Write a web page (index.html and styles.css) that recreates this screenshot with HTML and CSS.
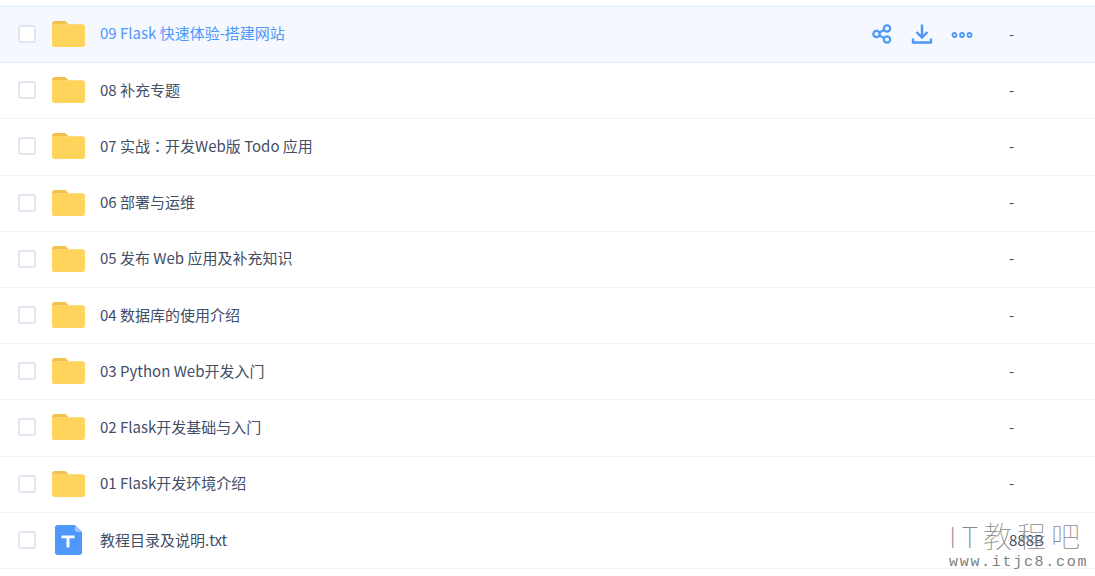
FILE: index.html
```html
<!DOCTYPE html>
<html lang="zh">
<head>
<meta charset="utf-8">
<title>文件列表</title>
<link rel="stylesheet" href="styles.css">
</head>
<body>
<svg class="defs" width="0" height="0">
  <symbol id="folder" viewBox="0 0 33 26">
    <path d="M0 3C0 1.300 1.200 0 2.800 0h9.500c1 0 1.600.4 2.200 1L16.500 3.500H0z" fill="#f0c050"/>
    <path d="M0 4.500C0 3.800 .6 3.300 1.300 3.300H30.500c1.400 0 2.500 1.100 2.500 2.500V23.700c0 1.300-1.100 2.300-2.500 2.300H2.500C1.100 26 0 25 0 23.700z" fill="#ffd45c"/>
  </symbol>
</svg>
<main class="list">
  <div class="row active">
    <span class="check"></span>
    <svg class="folder"><use href="#folder"/></svg>
    <span class="name">09 Flask 快速体验-搭建网站</span>
    <div class="actions">
      <svg class="act" width="22" height="22" viewBox="0 0 22 22" fill="none" stroke="#4e97f7" stroke-width="2.200"><circle cx="5.500" cy="11" r="3.200"/><circle cx="16" cy="5.500" r="3.200"/><circle cx="16" cy="16.500" r="3.200"/><path d="M8.500 9.500l4.700-2.600M8.500 12.500l4.700 2.600"/></svg>
      <svg class="act" width="22" height="22" viewBox="0 0 22 22" fill="none" stroke="#4e97f7" stroke-width="2.400"><path d="M11 1.500v12.500M5.500 9l5.500 5.500L16.500 9"/><path d="M2 15.500v4h18v-4" stroke-linejoin="round"/></svg>
      <svg class="act" width="22" height="22" viewBox="0 0 22 22" fill="none" stroke="#4e97f7" stroke-width="1.800"><circle cx="3.500" cy="12" r="2"/><circle cx="11" cy="12" r="2"/><circle cx="18.500" cy="12" r="2"/></svg>
    </div>
    <span class="size">-</span>
  </div>
  <div class="row"><span class="check"></span><svg class="folder"><use href="#folder"/></svg><span class="name">08 补充专题</span><span class="size">-</span></div>
  <div class="row"><span class="check"></span><svg class="folder"><use href="#folder"/></svg><span class="name">07 实战<span class="punct" lang="zh-TW">：</span>开发Web版 Todo 应用</span><span class="size">-</span></div>
  <div class="row"><span class="check"></span><svg class="folder"><use href="#folder"/></svg><span class="name">06 部署与运维</span><span class="size">-</span></div>
  <div class="row"><span class="check"></span><svg class="folder"><use href="#folder"/></svg><span class="name">05 发布 Web 应用及补充知识</span><span class="size">-</span></div>
  <div class="row"><span class="check"></span><svg class="folder"><use href="#folder"/></svg><span class="name">04 数据库的使用介绍</span><span class="size">-</span></div>
  <div class="row"><span class="check"></span><svg class="folder"><use href="#folder"/></svg><span class="name">03 Python Web开发入门</span><span class="size">-</span></div>
  <div class="row"><span class="check"></span><svg class="folder"><use href="#folder"/></svg><span class="name">02 Flask开发基础与入门</span><span class="size">-</span></div>
  <div class="row"><span class="check"></span><svg class="folder"><use href="#folder"/></svg><span class="name">01 Flask开发环境介绍</span><span class="size">-</span></div>
  <div class="row last">
    <span class="check"></span>
    <svg class="file" viewBox="0 0 27 30"><path d="M2.500 0H20l7 7v20.500c0 1.400-1.100 2.500-2.500 2.500h-22C1.100 30 0 28.900 0 27.500v-25C0 1.100 1.100 0 2.500 0z" fill="#4e97fb"/><path d="M20 0l7 7h-5c-1.200 0-2-.8-2-2z" fill="#9cc5fd"/><path d="M6.500 10.500h13v2.800h-5v9.200h-3v-9.200h-5z" fill="#fff"/></svg>
    <span class="name">教程目录及说明.txt</span>
    <span class="size">888B</span>
  </div>
</main>
<div class="mark">
  <div class="mark-title">IT教程吧</div>
  <div class="mark-url">www.itjc8.com</div>
</div>
</body>
</html>
```
FILE: styles.css
```css
* { box-sizing: border-box; }
html, body { margin: 0; background: #fff; overflow: hidden; }
body {
  height: 576px;
  padding-top: 6px;
  font-family: "Noto Sans CJK SC", sans-serif;
  font-size: 15px;
  color: #424e67;
}
.defs { position: absolute; }
.list { border-top: 1px solid #f1f5fb; }
.row {
  display: flex;
  align-items: center;
  height: 56.2px;
  border-bottom: 1px solid #f1f5fb;
  padding: 0 0 1px 18px;
}
.row.active {
  background: #f5f9ff;
  border-bottom-color: #ddebfc;
  box-shadow: 0 -1px 0 #ddebfc;
  color: #4d97f8;
}
.row.active .name { padding-bottom: 2px; }
.row.last { padding-bottom: 0; }
.row.last .name { padding-bottom: 0; }
.check {
  flex: none;
  width: 18px;
  height: 18px;
  border: 2px solid #e0e5ee;
  border-radius: 3px;
  background: #fff;
}
.folder {
  flex: none;
  width: 33px;
  height: 26px;
  margin: 0 15px 0 16px;
}
.file {
  flex: none;
  width: 27px;
  height: 30px;
  margin: 0 18px 0 19px;
}
.name {
  flex: none;
  width: 760px;
  line-height: 20px;
  padding-bottom: 1px;
  white-space: nowrap;
}
.punct { font-family: "Noto Sans CJK TC", sans-serif; }
.actions {
  position: absolute;
  left: 871px;
  display: flex;
  gap: 18px;
}
.act { display: block; }
.size {
  position: absolute;
  left: 1009px;
  line-height: 20px;
  padding-bottom: 1px;
  color: #424e67;
}
.mark {
  position: absolute;
  left: 949px;
  top: 518px;
  width: 146px;
  font-family: "Noto Sans CJK SC", sans-serif;
  color: #808080;
}
.mark-title {
  font-size: 29px;
  line-height: 34px;
  font-weight: 100;
  letter-spacing: 5px;
  white-space: nowrap;
  color: #8a8a8a;
}
.mark-url {
  margin-top: 4px;
  font-family: "Liberation Mono", monospace;
  font-size: 15px;
  line-height: 14px;
  letter-spacing: 1.700px;
  white-space: nowrap;
}
```
